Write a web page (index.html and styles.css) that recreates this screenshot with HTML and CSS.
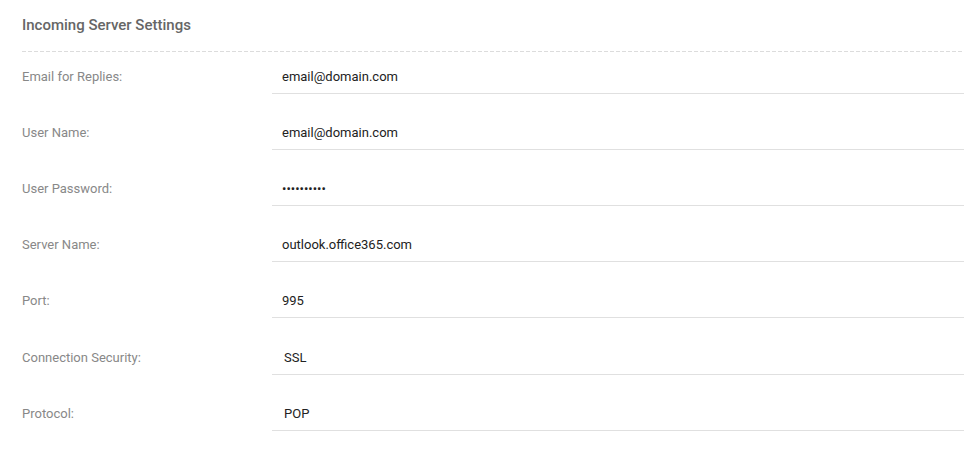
FILE: index.html
```html
<!DOCTYPE html>
<html lang="en">
<head>
<meta charset="utf-8">
<title>Incoming Server Settings</title>
<link rel="stylesheet" href="styles.css">
</head>
<body>
<section class="settings">
  <h2 class="settings-title">Incoming Server Settings</h2>
  <div class="form">
    <div class="row">
      <div class="label">Email for Replies:</div>
      <div class="field">email@domain.com</div>
    </div>
    <div class="row">
      <div class="label">User Name:</div>
      <div class="field">email@domain.com</div>
    </div>
    <div class="row">
      <div class="label">User Password:</div>
      <div class="field password">••••••••••</div>
    </div>
    <div class="row">
      <div class="label">Server Name:</div>
      <div class="field">outlook.office365.com</div>
    </div>
    <div class="row">
      <div class="label">Port:</div>
      <div class="field">995</div>
    </div>
    <div class="row row-select">
      <div class="label">Connection Security:</div>
      <div class="field select">SSL</div>
    </div>
    <div class="row">
      <div class="label">Protocol:</div>
      <div class="field select">POP</div>
    </div>
  </div>
</section>
</body>
</html>
```
FILE: styles.css
```css
html, body {
  margin: 0;
  padding: 0;
  background: #ffffff;
}

body {
  font-family: Roboto, "Liberation Sans", Arial, sans-serif;
}

.settings {
  padding-left: 22px;
}

.settings-title {
  margin: 0;
  padding: 15px 0 17px;
  font-size: 15px;
  line-height: 20px;
  font-weight: 500;
  color: #666666;
  background-image: repeating-linear-gradient(to right, #dcdcdc 0, #dcdcdc 4px, transparent 4px, transparent 6px);
  background-size: 100% 1px;
  background-repeat: no-repeat;
  background-position: left bottom;
}

.form {
  display: flex;
  flex-direction: column;
  gap: 15px;
  padding-top: 1px;
}

.row {
  display: flex;
  align-items: flex-end;
}

.row-select {
  margin-top: 1px;
}

.label {
  width: 250px;
  flex: none;
  font-size: 13px;
  line-height: 20px;
  color: #888888;
  padding-bottom: 7px;
}

.field {
  flex: 1;
  padding: 14px 0 6px 10px;
  font-size: 13px;
  line-height: 20px;
  color: #222222;
  border-bottom: 1px solid #e0e0e0;
}

.field.select {
  padding-left: 12px;
}
```
